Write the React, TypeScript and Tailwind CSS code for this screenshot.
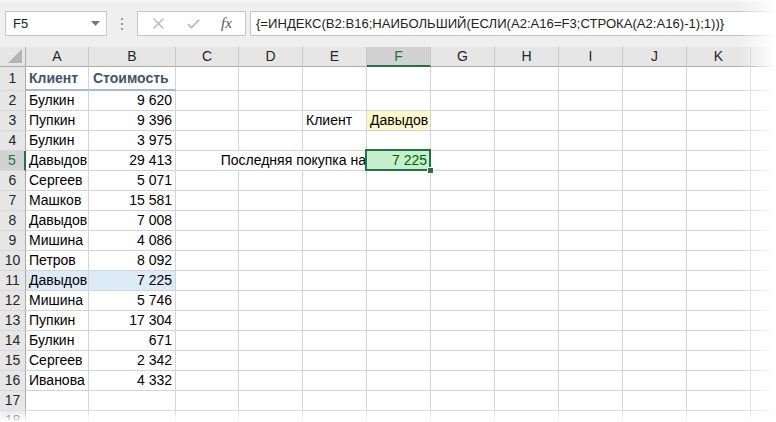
import React from "react";

const colLetters = ["A", "B", "C", "D", "E", "F", "G", "H", "I", "J", "K", ""];
const colW = [63, 87, 63, 64, 64, 64, 64, 64, 64, 64, 64, 64];

const data: [string, string][] = [
  ["Булкин", "9 620"],
  ["Пупкин", "9 396"],
  ["Булкин", "3 975"],
  ["Давыдов", "29 413"],
  ["Сергеев", "5 071"],
  ["Машков", "15 581"],
  ["Давыдов", "7 008"],
  ["Мишина", "4 086"],
  ["Петров", "8 092"],
  ["Давыдов", "7 225"],
  ["Мишина", "5 746"],
  ["Пупкин", "17 304"],
  ["Булкин", "671"],
  ["Сергеев", "2 342"],
  ["Иванова", "4 332"],
];

const cellFont = { fontFamily: '"Liberation Sans", Arial, sans-serif' };

function Cell({ r, c }: { r: number; c: number }) {
  const w = colW[c];
  let content: React.ReactNode = null;
  let cls = "border-r border-b border-[#d4d4d4] bg-white";
  let align = "justify-start pl-[3px]";
  let textCls = "text-black";
  let extra: React.ReactNode = null;

  if (r === 1 && c < 2) {
    content = c === 0 ? "Клиент" : "Стоимость";
    textCls = "font-bold text-[#44546a]";
    cls = "border-r border-[#d4d4d4] border-b-2 border-b-[#a3b8e2] bg-white";
    align = c === 0 ? "justify-start pl-[3px]" : "justify-start pl-[4px]";
  } else if (r >= 2 && r <= 16 && c < 2) {
    const d = data[r - 2];
    content = c === 0 ? d[0] : d[1];
    align = c === 0 ? "justify-start pl-[3px]" : "justify-end pr-[3px]";
    if (r === 11) cls = "border-r border-b border-[#d4d4d4] bg-[#ddebf7]";
  } else if (r === 3 && c === 4) {
    content = "Клиент";
  } else if (r === 3 && c === 5) {
    content = "Давыдов";
    cls = "border-r border-b border-[#d4d4d4] bg-[#fff8cc]";
  } else if (r === 5 && (c === 2 || c === 3)) {
    cls = "border-b border-[#d4d4d4] bg-white";
  } else if (r === 5 && c === 4) {
    content = "Последняя покупка на";
    align = "justify-end pr-0";
  } else if (r === 5 && c === 5) {
    content = "7 225";
    align = "justify-end pr-[3px]";
    cls = "border-r border-b border-[#d4d4d4] bg-[#c6efce] relative";
    textCls = "text-[#006100]";
    extra = (
      <>
        <div className="absolute -top-[2px] -left-[2px] -right-[1px] -bottom-[1px] border-2 border-[#217346]" />
        <div className="absolute -right-[4px] -bottom-[4px] w-[7px] h-[7px] bg-[#217346] border border-white" />
      </>
    );
  }

  return (
    <div
      className={`${cls} flex items-center shrink-0 whitespace-nowrap text-[14px] ${align}`}
      style={{ width: w, ...cellFont }}
    >
      {content !== null && <span className={textCls}>{content}</span>}
      {extra}
    </div>
  );
}

function Row({ r }: { r: number }) {
  const h = r === 1 ? 24 : 20;
  const active = r === 5;
  return (
    <div className="flex" style={{ height: h }}>
      <div
        className={`w-[26px] shrink-0 flex items-center justify-center text-[14px] border-b border-[#d8d8d8] ${
          active
            ? "bg-[#d2d2d2] text-[#217346] border-r-2 border-r-[#217346]"
            : "bg-[#e6e6e6] text-[#262626] border-r border-r-[#ababab]"
        }`}
        style={cellFont}
      >
        {r}
      </div>
      {colW.map((_, c) => (
        <Cell key={c} r={r} c={c} />
      ))}
    </div>
  );
}

function Toolbar() {
  return (
    <div className="h-[47px] bg-[#efefef] border-t-[2px] border-t-[#f7f7f7] flex items-start pt-[9px]" style={{ fontFamily: '"Liberation Sans", Arial, sans-serif' }}>
      <div className="ml-[5px] w-[102px] h-[25px] bg-white border border-[#c6c6c6] flex items-center justify-between pl-[7px] pr-[6px]">
        <span className="text-[13px] text-[#222]">F5</span>
        <svg width="9" height="5" viewBox="0 0 9 5">
          <path d="M0 0 L9 0 L4.5 5 Z" fill="#777" />
        </svg>
      </div>
      <div className="w-[30px] h-[25px] flex items-center justify-center">
        <svg width="3" height="12" viewBox="0 0 3 12">
          <rect x="0" y="0" width="2" height="2" fill="#9a9a9a" />
          <rect x="0" y="5" width="2" height="2" fill="#9a9a9a" />
          <rect x="0" y="10" width="2" height="2" fill="#9a9a9a" />
        </svg>
      </div>
      <div className="w-[109px] h-[25px] bg-white border border-[#c6c6c6] flex items-center">
        <div className="w-[38px] flex justify-center pl-[2px]">
          <svg width="11" height="11" viewBox="0 0 11 11">
            <path d="M0.5 0.5 L10.5 10.5 M10.5 0.5 L0.5 10.5" stroke="#b4b4b4" strokeWidth="1.3" fill="none" />
          </svg>
        </div>
        <div className="w-[34px] flex justify-center">
          <svg width="13" height="10" viewBox="0 0 13 10">
            <path d="M0.8 5 L4.5 8.6 L12.2 0.8" stroke="#b4b4b4" strokeWidth="1.6" fill="none" />
          </svg>
        </div>
        <div className="flex-1 flex justify-center pr-[2px]">
          <span className="italic text-[15px] text-[#555]" style={{ fontFamily: '"Liberation Serif", "Times New Roman", serif' }}>
            fx
          </span>
        </div>
      </div>
      <div className="ml-[4px] flex-1 h-[25px] bg-white border border-[#c6c6c6] flex items-center pl-[5px] whitespace-nowrap overflow-hidden">
        <span className="text-[13.1px] text-[#222]">
          {"{=ИНДЕКС(B2:B16;НАИБОЛЬШИЙ(ЕСЛИ(A2:A16=F3;СТРОКА(A2:A16)-1);1))}"}
        </span>
      </div>
    </div>
  );
}

function HeaderRow() {
  return (
    <div className="flex h-[20px] bg-[#e6e6e6]" style={cellFont}>
      <div className="w-[26px] shrink-0 border-r border-[#ababab] border-b border-b-[#ababab] relative">
        <svg className="absolute right-[3px] bottom-[3px]" width="14" height="14" viewBox="0 0 14 14">
          <path d="M14 0 L14 14 L0 14 Z" fill="#b4b4b4" />
        </svg>
      </div>
      {colW.map((w, c) => {
        const active = c === 5;
        return (
          <div
            key={c}
            className={`shrink-0 flex items-center justify-center text-[14px] border-r border-[#c8c8c8] ${
              active
                ? "bg-[#d2d2d2] text-[#217346] border-b-2 border-b-[#217346]"
                : "text-[#262626] border-b border-b-[#ababab]"
            }`}
            style={{ width: w }}
          >
            {colLetters[c]}
          </div>
        );
      })}
    </div>
  );
}

export default function App() {
  const rows = Array.from({ length: 18 }, (_, i) => i + 1);
  return (
    <div className="relative w-[776px] h-[422px] overflow-hidden bg-white">
      <Toolbar />
      <HeaderRow />
      {rows.map((r) => (
        <Row key={r} r={r} />
      ))}
      <div className="absolute top-0 right-0 h-full w-[36px] bg-gradient-to-r from-white/0 to-white" />
      <div className="absolute bottom-0 left-0 w-full h-[14px] bg-gradient-to-b from-white/0 to-white" />
    </div>
  );
}
